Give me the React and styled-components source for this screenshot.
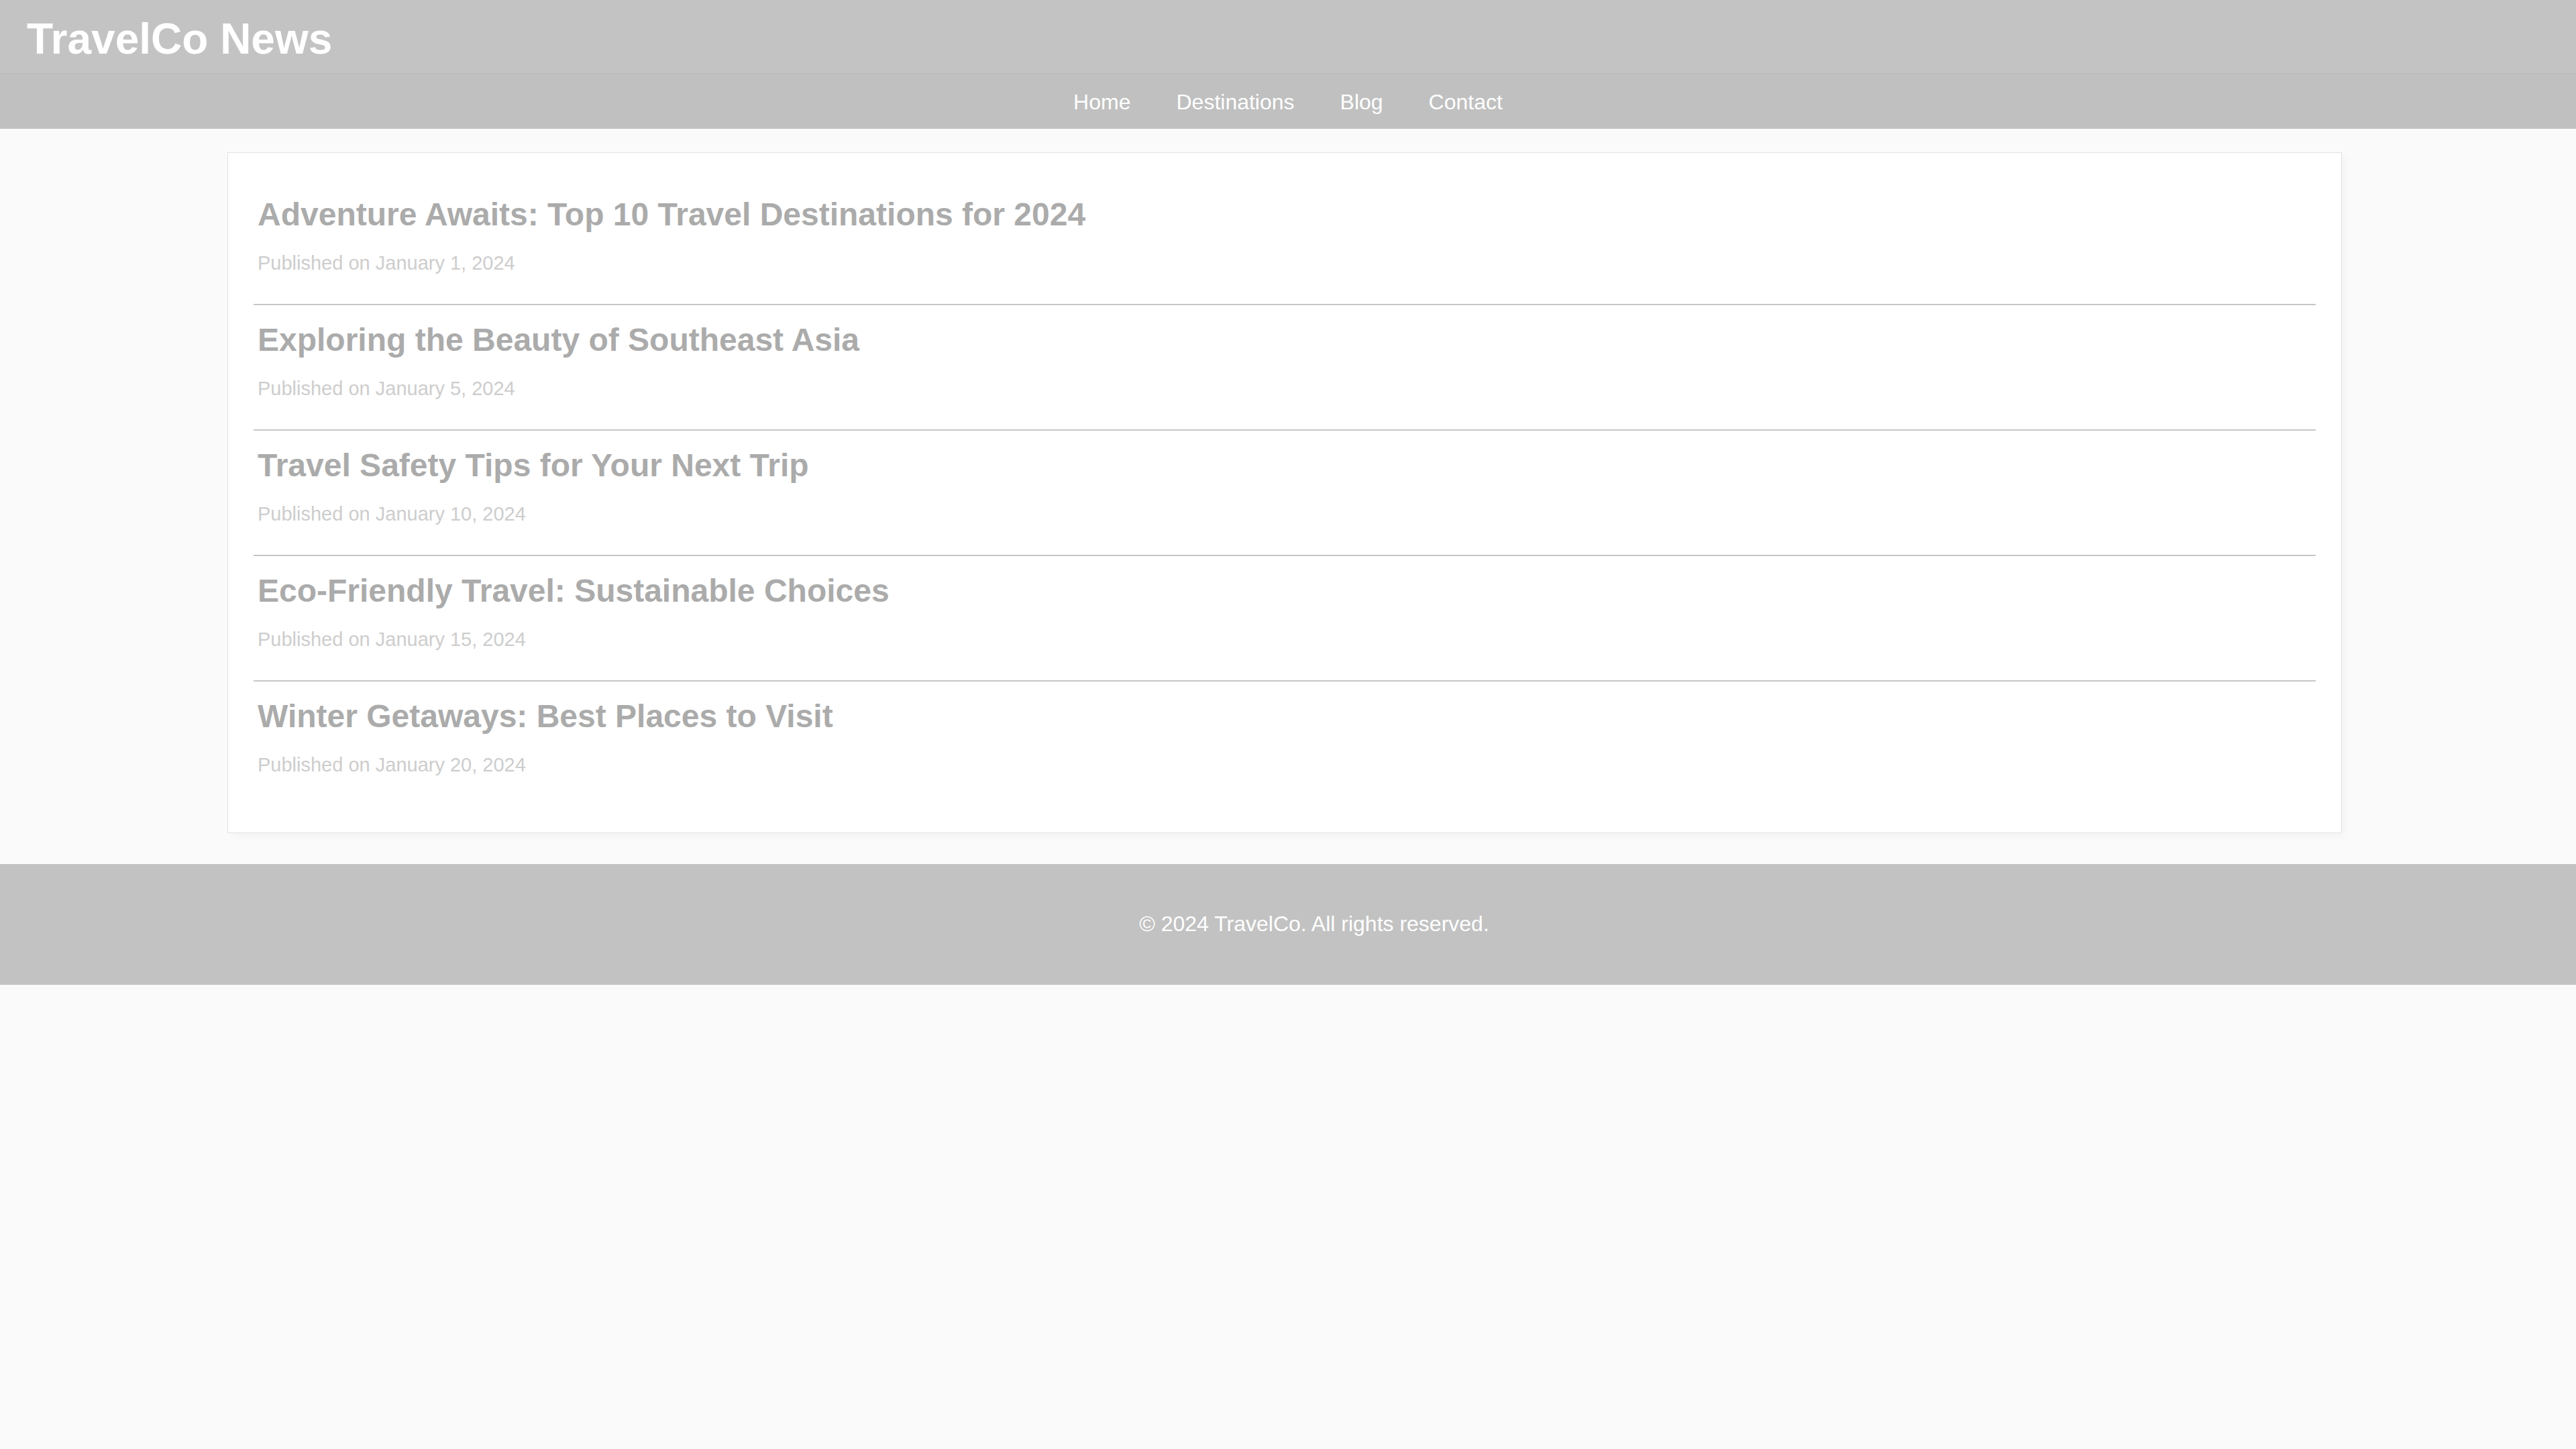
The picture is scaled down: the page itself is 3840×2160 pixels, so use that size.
import React from "react";
import styled, { createGlobalStyle } from "styled-components";

const GlobalStyle = createGlobalStyle`
  html, body {
    margin: 0;
    padding: 0;
    background: #fafafa;
    font-family: "Liberation Sans", Arial, Helvetica, sans-serif;
  }
  * { box-sizing: border-box; }
`;

const Page = styled.div`
  min-height: 2160px;
  background: #fafafa;
  display: flex;
  flex-direction: column;
`;

const Header = styled.header`
  background: #c3c3c3;
  padding: 21px 40px 14px;
`;

const Brand = styled.h1`
  margin: 0;
  font-size: 64px;
  font-weight: 700;
  line-height: normal;
  color: #ffffff;
`;

const Nav = styled.nav`
  background: #c0c0c0;
  border-top: 1px solid #b9b9b9;
  padding: 24px 0 21px;
  display: flex;
  justify-content: center;
  gap: 68px;
`;

const NavLink = styled.a`
  font-size: 32px;
  line-height: normal;
  color: #ffffff;
  text-decoration: none;
`;

const Main = styled.main`
  padding: 35px 349px 46px 339px;
`;

const Card = styled.section`
  background: #ffffff;
  border: 1px solid #e2e2e2;
  box-shadow: 6px 6px 10px rgba(0, 0, 0, 0.025);
  padding: 40px 38px;
  display: flex;
  flex-direction: column;
`;

const Article = styled.article`
  padding: 24px 6px 45px;
  border-bottom: ${(p) => (p.$last ? "none" : "2px solid #c6c6c6")};
`;

const Title = styled.h2`
  margin: 0;
  font-size: 48px;
  font-weight: 700;
  line-height: normal;
  color: #ababab;
`;

const Meta = styled.p`
  margin: 29px 0 0;
  font-size: 29px;
  line-height: 32px;
  color: #cdcdcd;
`;

const Footer = styled.footer`
  background: #c2c2c2;
  padding: 71px 0 72px 78px;
  text-align: center;
`;

const FooterText = styled.p`
  margin: 0;
  font-size: 32px;
  line-height: normal;
  color: #ffffff;
`;

const articles = [
  { title: "Adventure Awaits: Top 10 Travel Destinations for 2024", date: "January 1, 2024" },
  { title: "Exploring the Beauty of Southeast Asia", date: "January 5, 2024" },
  { title: "Travel Safety Tips for Your Next Trip", date: "January 10, 2024" },
  { title: "Eco-Friendly Travel: Sustainable Choices", date: "January 15, 2024" },
  { title: "Winter Getaways: Best Places to Visit", date: "January 20, 2024" },
];

export default function App() {
  return (
    <Page>
      <GlobalStyle />
      <Header>
        <Brand>TravelCo News</Brand>
      </Header>
      <Nav>
        <NavLink href="#">Home</NavLink>
        <NavLink href="#">Destinations</NavLink>
        <NavLink href="#">Blog</NavLink>
        <NavLink href="#">Contact</NavLink>
      </Nav>
      <Main>
        <Card>
          {articles.map((a, i) => (
            <Article key={a.title} $last={i === articles.length - 1}>
              <Title>{a.title}</Title>
              <Meta>Published on {a.date}</Meta>
            </Article>
          ))}
        </Card>
      </Main>
      <Footer>
        <FooterText>© 2024 TravelCo. All rights reserved.</FooterText>
      </Footer>
    </Page>
  );
}
